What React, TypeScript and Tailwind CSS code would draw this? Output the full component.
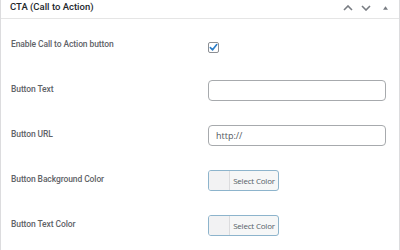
import { useState } from "react";

const font = { fontFamily: '"Open Sans", "Noto Sans", sans-serif' };
const labelFont = { fontFamily: 'Roboto, "Open Sans", sans-serif' };

function ColorButton() {
  return (
    <button className="mt-[1px] flex h-[21px] w-[71px] overflow-hidden rounded-[3px] border border-[#8db4cc] bg-[#f6f7f7] p-0">
      <span className="h-full w-[21px] border-r border-[#dcdcde] bg-[#f2f2f3]" />
      <span className="flex-1 text-center text-[8px] leading-[19px] tracking-[-0.2px] text-[#555d66]">Select Color</span>
    </button>
  );
}

export default function App() {
  const [enabled, setEnabled] = useState(true);
  const [text, setText] = useState("");
  const [url, setUrl] = useState("http://");

  const rows = [
    {
      label: "Enable Call to Action button",
      control: (
        <button
          onClick={() => setEnabled(!enabled)}
          className="mt-[5px] flex h-[11px] w-[11px] items-center justify-center rounded-[2px] border border-[#8c8f94] bg-white"
        >
          {enabled && (
            <svg width="9" height="9" viewBox="0 0 10 10">
              <path d="M1.5 5.2 L4 7.6 L8.6 1.8" stroke="#2a7cc7" strokeWidth="1.8" fill="none" strokeLinecap="round" strokeLinejoin="round" />
            </svg>
          )}
        </button>
      ),
    },
    {
      label: "Button Text",
      control: (
        <input
          value={text}
          onChange={(e) => setText(e.target.value)}
          className="mt-[2px] h-[21px] w-[178px] rounded-[4px] border border-[#a7aaad] bg-white px-[7px] text-[9px] text-[#50575e] outline-none"
          style={font}
        />
      ),
    },
    {
      label: "Button URL",
      control: (
        <input
          value={url}
          onChange={(e) => setUrl(e.target.value)}
          className="mt-[2px] h-[21px] w-[178px] rounded-[4px] border border-[#a7aaad] bg-white px-[7px] text-[9px] text-[#50575e] outline-none"
          style={font}
        />
      ),
    },
    { label: "Button Background Color", control: <ColorButton /> },
    { label: "Button Text Color", control: <ColorButton /> },
  ];

  return (
    <div className="h-[250px] w-[400px] overflow-hidden bg-white" style={font}>
      <div className="h-[250px] border-x border-[#dcdcde]">
        {/* Header */}
        <div className="flex h-[19px] items-center justify-between border-b border-[#e5e5e5] pb-[3px] pl-[9px] pr-[11px]">
          <span className="text-[9.5px] font-medium text-[#23282d]" style={labelFont}>
            CTA (Call to Action)
          </span>
          <div className="flex items-center">
            <svg width="10" height="6" viewBox="0 0 10 6" className="mr-[8px]">
              <path d="M1 5 L5 1 L9 5" stroke="#787c82" strokeWidth="1.6" fill="none" />
            </svg>
            <svg width="10" height="6" viewBox="0 0 10 6" className="mr-[12px]">
              <path d="M1 1 L5 5 L9 1" stroke="#787c82" strokeWidth="1.6" fill="none" />
            </svg>
            <svg width="5" height="4" viewBox="0 0 6 4">
              <path d="M0 4 L3 0 L6 4 Z" fill="#787c82" />
            </svg>
          </div>
        </div>

        {/* Fields */}
        <div className="pt-[3px]">
          {rows.map((r) => (
            <div key={r.label} className="flex h-[45px] items-center pl-[10px]">
              <span className="w-[197px] text-[8.5px] font-medium tracking-[-0.1px] text-[#5f6368]" style={labelFont}>
                {r.label}
              </span>
              {r.control}
            </div>
          ))}
        </div>
      </div>
    </div>
  );
}
